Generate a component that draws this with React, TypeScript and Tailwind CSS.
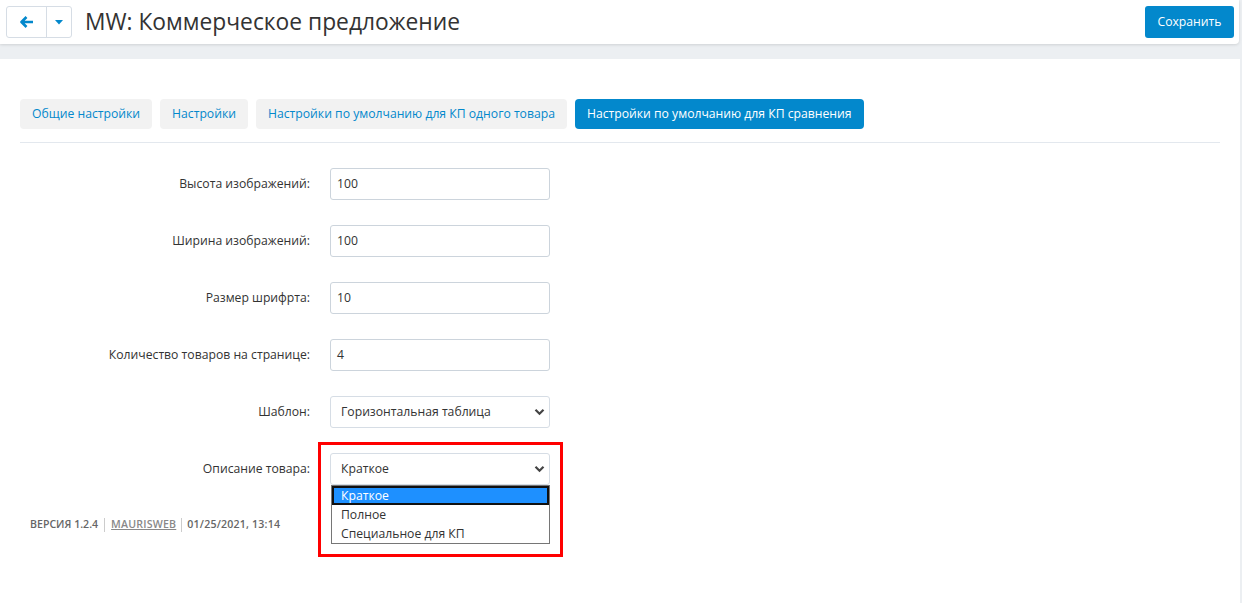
import { useState } from "react";

const rows = [
  { label: "Высота изображений:", value: "100" },
  { label: "Ширина изображений:", value: "100" },
  { label: "Размер шрифрта:", value: "10" },
  { label: "Количество товаров на странице:", value: "4" },
];

const tabs = [
  "Общие настройки",
  "Настройки",
  "Настройки по умолчанию для КП одного товара",
  "Настройки по умолчанию для КП сравнения",
];

function Chevron() {
  return (
    <svg width="11" height="8" viewBox="0 0 11 8" className="text-[#444]">
      <path d="M1.5 1.8 5.5 5.8 9.5 1.8" fill="none" stroke="currentColor" strokeWidth="2.2" />
    </svg>
  );
}

export default function App() {
  const [active] = useState(3);
  const options = ["Краткое", "Полное", "Специальное для КП"];

  return (
    <div
      className="w-[1242px] h-[603px] overflow-hidden bg-[#eceff2] text-[#333]"
      style={{ fontFamily: '"Open Sans", "Noto Sans", sans-serif' }}
    >
      {/* header */}
      <div className="h-[44px] w-[1239px] bg-white rounded-br-[4px] shadow-[0_1px_3px_rgba(0,0,0,0.12)] flex items-center pl-[6px] pr-[5px]">
        <div className="flex h-[32px] border border-[#d6dde5] rounded-[3px]">
          <button className="w-[40px] flex items-center justify-center border-r border-[#d6dde5]">
            <svg width="14" height="12" viewBox="0 0 14 12" className="text-[#0388cc]">
              <path d="M6.5 1 1.5 6 6.5 11M1.8 6H13" fill="none" stroke="currentColor" strokeWidth="2.6" strokeLinejoin="round" />
            </svg>
          </button>
          <button className="w-[24px] flex items-center justify-center">
            <svg width="8" height="5" viewBox="0 0 8 5" className="text-[#0388cc]">
              <path d="M0 0h8L4 4.5z" fill="currentColor" />
            </svg>
          </button>
        </div>
        <h1 className="ml-[13px] text-[22.8px] leading-none text-[#333]">
          MW: Коммерческое предложение
        </h1>
        <button className="ml-auto h-[32px] w-[89px] bg-[#0388cc] text-white text-[12.2px] rounded-[3px]">
          Сохранить
        </button>
      </div>

      {/* content panel */}
      <div className="mt-[15px] w-[1240px] h-[560px] bg-white px-[20px] pt-[40px]">
        <div className="flex gap-[8px] pb-[13px] border-b border-[#e3e8ee] w-[1200px]">
          {tabs.map((t, i) => (
            <div
              key={t}
              className={`h-[30px] px-[12px] flex items-center rounded-[4px] text-[12.2px] ${
                i === active ? "bg-[#0388cc] text-white" : "bg-[#f2f2f2] text-[#0388cc]"
              }`}
            >
              {t}
            </div>
          ))}
        </div>

        <div className="pt-[25px] flex flex-col gap-[25px] text-[12.2px]">
          {rows.map((r) => (
            <div key={r.label} className="flex items-center">
              <label className="w-[290px] text-right text-[#333]">{r.label}</label>
              <div className="ml-[20px] w-[220px] h-[32px] border border-[#ccd4dc] rounded-[3px] flex items-center px-[6px] text-[#333]">
                {r.value}
              </div>
            </div>
          ))}

          <div className="flex items-center">
            <label className="w-[290px] text-right text-[#333]">Шаблон:</label>
            <div className="ml-[20px] w-[220px] h-[32px] border border-[#d6dde5] rounded-[3px] flex items-center justify-between pl-[10px] pr-[4px] text-[#333]">
              <span>Горизонтальная таблица</span>
              <Chevron />
            </div>
          </div>

          <div className="flex items-center">
            <label className="w-[290px] text-right text-[#333]">Описание товара:</label>
            <div className="relative ml-[20px] w-[220px]">
              <div className="h-[32px] border border-[#d6dde5] rounded-[3px] flex items-center justify-between pl-[10px] pr-[4px] text-[#333]">
                <span>Краткое</span>
                <Chevron />
              </div>
              <div className="absolute left-[1px] top-[32px] w-[219px] bg-white border border-[#767676] leading-[19px] z-10">
                {options.map((o, i) => (
                  <div
                    key={o}
                    className={
                      i === 0
                        ? "bg-[#1e90ff] text-white border-2 border-[#111] pl-[7px] leading-[15px]"
                        : "pl-[9px] text-[#333]"
                    }
                  >
                    {o}
                  </div>
                ))}
              </div>
              <div className="absolute left-[-12px] top-[-11px] w-[245px] h-[115px] border-[3px] border-[#ff0000] pointer-events-none z-20" />
            </div>
          </div>
        </div>

        <div className="mt-[32px] ml-[10px] flex items-center text-[10.6px] text-[#666] font-semibold">
          <span>ВЕРСИЯ 1.2.4</span>
          <span className="mx-[6px] h-[14px] w-px bg-[#ccc]" />
          <span className="underline text-[#888] tracking-[0.2px]">MAURISWEB</span>
          <span className="mx-[5px] h-[14px] w-px bg-[#ccc]" />
          <span className="tracking-[0.2px]">01/25/2021, 13:14</span>
        </div>
      </div>
    </div>
  );
}
